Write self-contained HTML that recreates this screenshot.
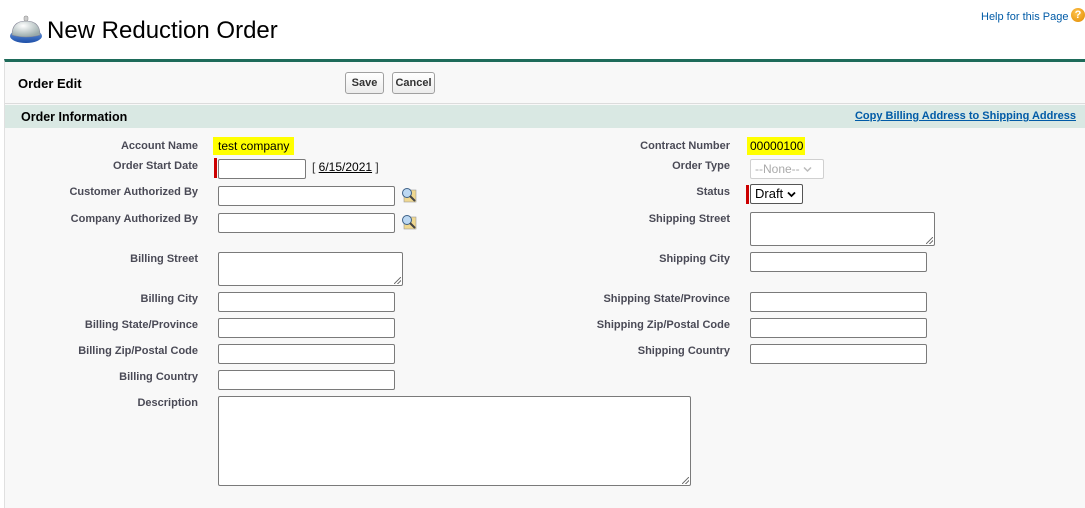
<!DOCTYPE html>
<html><head><meta charset="utf-8"><style>
*{box-sizing:border-box;margin:0;padding:0}
body{width:1085px;height:508px;background:#fff;font-family:"Liberation Sans",Arial,sans-serif;position:relative;overflow:hidden}
.a{position:absolute}
.lbl{position:absolute;font-size:11px;font-weight:bold;color:#4a4a56;text-align:right;white-space:nowrap;margin-top:1px}
.l{right:887px}
.r{right:355px}
.in{position:absolute;background:#fff;border:1px solid #7a7a7a;border-radius:2px;height:20px}
.req{position:absolute;background:#c00;width:3px}
.hl{position:absolute;background:#ffff00;font-size:12px;color:#000;padding:2px 5px 0 5px}
.btn{position:absolute;top:72px;height:22px;border:1px solid #a0a0a0;border-radius:3px;background:linear-gradient(#fff,#ececec);font-size:11px;font-weight:bold;color:#333;text-align:center;line-height:20px}
.grip{position:absolute;right:1px;bottom:1px;width:7px;height:7px;background:linear-gradient(135deg,transparent 45%,#777 46%,#777 54%,transparent 55%,transparent 70%,#777 71%,#777 79%,transparent 80%)}
</style></head><body>
<svg class="a" style="left:9px;top:14px" width="34" height="30" viewBox="0 0 34 30">
<defs><radialGradient id="g" cx="40%" cy="30%" r="70%"><stop offset="0" stop-color="#fff"/><stop offset="1" stop-color="#9aa"/></radialGradient>
<linearGradient id="b" x1="0" y1="0" x2="0" y2="1"><stop offset="0" stop-color="#6b9be0"/><stop offset="1" stop-color="#1d4fa8"/></linearGradient></defs>
<ellipse cx="17" cy="22" rx="16" ry="7" fill="url(#b)"/>
<path d="M3 21 Q3 7 17 7 Q31 7 31 21 Q17 25 3 21Z" fill="url(#g)" stroke="#889" stroke-width=".6"/>
<rect x="15" y="2" width="4" height="5" rx="1.5" fill="#ccc" stroke="#888" stroke-width=".5"/>
</svg>
<div class="a" style="left:47px;top:17px;font-size:24px;color:#000">New Reduction Order</div>
<div class="a" style="left:981px;top:11px;font-size:11px;color:#015ba7">Help for this Page</div>
<div class="a" style="left:1071px;top:8px;width:14px;height:14px;border-radius:50%;background:radial-gradient(circle at 40% 35%,#ffc34d,#e08a00);color:#fff;font-size:11px;font-weight:bold;text-align:center;line-height:14px">?</div>

<div class="a" style="left:4px;top:59px;width:1081px;height:449px;background:#f8f8f8;border-top:3px solid #1e6b5a;border-left:1px solid #e0e0e0"></div>
<div class="a" style="left:18px;top:76px;font-size:13px;font-weight:bold;color:#000">Order Edit</div>
<div class="btn" style="left:345px;width:39px">Save</div>
<div class="btn" style="left:392px;width:43px">Cancel</div>
<div class="a" style="left:5px;top:103px;width:1080px;height:1px;background:#dcdcdc"></div>
<div class="a" style="left:5px;top:105px;width:1080px;height:23px;background:#d9e8e3"></div>
<div class="a" style="left:21px;top:110px;font-size:12.5px;font-weight:bold;color:#000">Order Information</div>
<div class="a" style="right:9px;top:110px;font-size:11px;font-weight:bold;color:#015ba7;text-decoration:underline">Copy Billing Address to Shipping Address</div>

<div class="lbl l" style="top:139px">Account Name</div>
<div class="hl" style="left:213px;top:137px;height:18px">test company</div>
<div class="lbl l" style="top:159px">Order Start Date</div>
<div class="req" style="left:214px;top:158px;height:20px"></div>
<div class="in" style="left:218px;top:159px;width:88px"></div>
<div class="a" style="left:312px;top:160px;font-size:12px;color:#333">[ <span style="text-decoration:underline;color:#000">6/15/2021</span> ]</div>
<div class="lbl l" style="top:185px">Customer Authorized By</div>
<div class="in" style="left:218px;top:186px;width:177px"></div>
<div class="lbl l" style="top:212px">Company Authorized By</div>
<div class="in" style="left:218px;top:213px;width:177px"></div>
<svg class="a" style="left:401px;top:187px" width="16" height="16" viewBox="0 0 16 16"><rect x="3" y="3" width="12" height="12" fill="#f0d890" stroke="#999" stroke-width=".6"/><circle cx="6" cy="6" r="4.5" fill="#bcd8f2" stroke="#3c5f86"/><path d="M9 9 L14 14" stroke="#444" stroke-width="2"/></svg>
<svg class="a" style="left:401px;top:214px" width="16" height="16" viewBox="0 0 16 16"><rect x="3" y="3" width="12" height="12" fill="#f0d890" stroke="#999" stroke-width=".6"/><circle cx="6" cy="6" r="4.5" fill="#bcd8f2" stroke="#3c5f86"/><path d="M9 9 L14 14" stroke="#444" stroke-width="2"/></svg>
<div class="lbl l" style="top:252px">Billing Street</div>
<div class="in" style="left:218px;top:252px;width:185px;height:34px"><div class="grip"></div></div>
<div class="lbl l" style="top:292px">Billing City</div>
<div class="in" style="left:218px;top:292px;width:177px"></div>
<div class="lbl l" style="top:318px">Billing State/Province</div>
<div class="in" style="left:218px;top:318px;width:177px"></div>
<div class="lbl l" style="top:344px">Billing Zip/Postal Code</div>
<div class="in" style="left:218px;top:344px;width:177px"></div>
<div class="lbl l" style="top:370px">Billing Country</div>
<div class="in" style="left:218px;top:370px;width:177px"></div>
<div class="lbl l" style="top:396px">Description</div>
<div class="in" style="left:218px;top:396px;width:473px;height:90px"><div class="grip"></div></div>

<div class="lbl r" style="top:139px">Contract Number</div>
<div class="hl" style="left:747px;top:137px;height:18px;padding-left:3px;width:58px">00000100</div>
<div class="lbl r" style="top:159px">Order Type</div>
<div class="in" style="left:750px;top:159px;width:74px;border-color:#d0d0d0;font-size:12px;color:#aaa;padding:2px 0 0 4px">--None-- <svg width="9" height="7" viewBox="0 0 9 7"><path d="M1 1.5 L4.5 5 L8 1.5" stroke="#bbb" stroke-width="1.5" fill="none"/></svg></div>
<div class="lbl r" style="top:185px">Status</div>
<div class="req" style="left:746px;top:185px;height:19px"></div>
<div class="in" style="left:750px;top:184px;width:53px;border-color:#555;font-size:13px;color:#000;padding:1px 0 0 4px">Draft <svg width="9" height="7" viewBox="0 0 9 7"><path d="M1 1.5 L4.5 5 L8 1.5" stroke="#000" stroke-width="1.8" fill="none"/></svg></div>
<div class="lbl r" style="top:212px">Shipping Street</div>
<div class="in" style="left:750px;top:212px;width:185px;height:34px"><div class="grip"></div></div>
<div class="lbl r" style="top:252px">Shipping City</div>
<div class="in" style="left:750px;top:252px;width:177px"></div>
<div class="lbl r" style="top:292px">Shipping State/Province</div>
<div class="in" style="left:750px;top:292px;width:177px"></div>
<div class="lbl r" style="top:318px">Shipping Zip/Postal Code</div>
<div class="in" style="left:750px;top:318px;width:177px"></div>
<div class="lbl r" style="top:344px">Shipping Country</div>
<div class="in" style="left:750px;top:344px;width:177px"></div>
</body></html>
